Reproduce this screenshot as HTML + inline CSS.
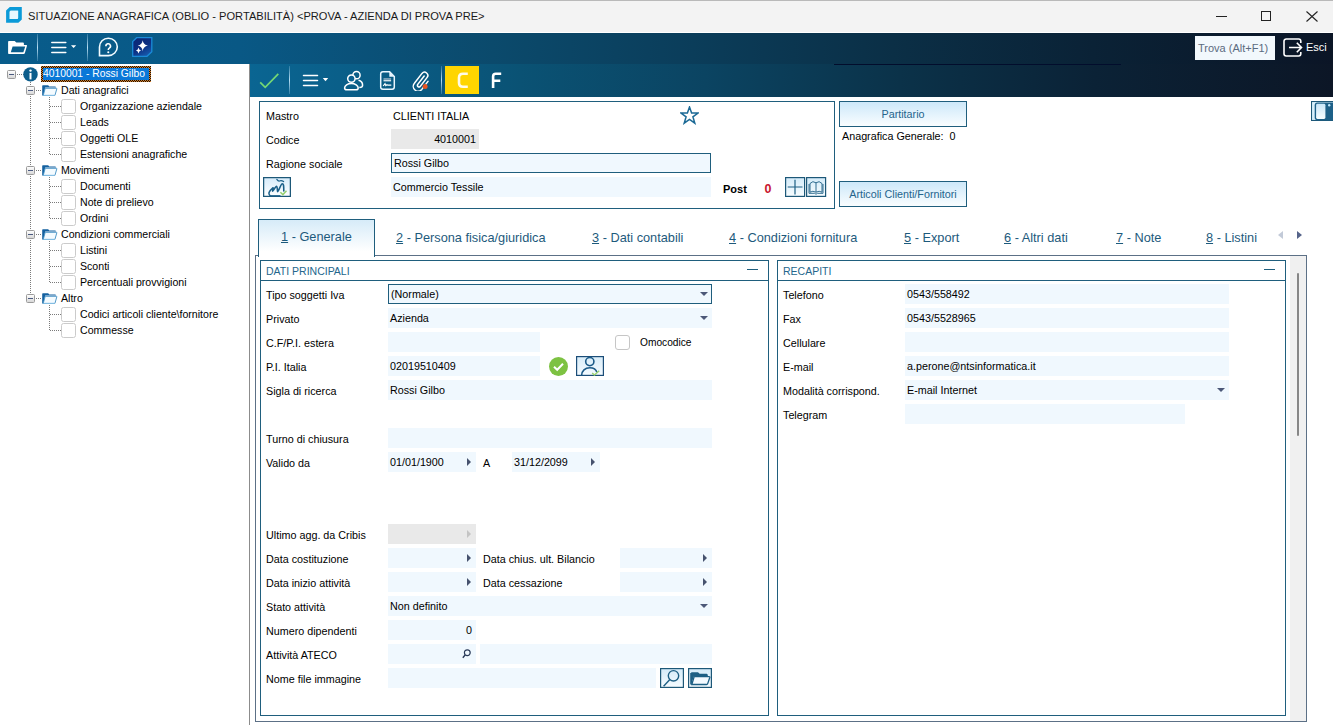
<!DOCTYPE html>
<html><head><meta charset="utf-8">
<style>
*{margin:0;padding:0;box-sizing:border-box}
html,body{width:1333px;height:725px;overflow:hidden;background:#fff;font-family:"Liberation Sans",sans-serif;color:#000}
.a{position:absolute}
.t{position:absolute;white-space:nowrap;font-size:10.75px;line-height:20px}
#title{left:0;top:0;width:1333px;height:32px;background:#f3f3f3;border-top:1px solid #b9b9b9}
#tb1{left:0;top:33px;width:1333px;height:31px;background:linear-gradient(90deg,#085c8b 0%,#095885 18%,#0b4a6c 37%,#0b3d5a 52%,#0b2f46 67%,#0a2236 82%,#0b1526 100%)}
#tb2{left:250px;top:64px;width:1083px;height:33px;background:linear-gradient(90deg,#0a6592 0%,#0a5a82 15%,#0a5274 25%,#0b4462 42%,#0b3249 60%,#0b2236 78%,#0c1626 100%)}
#tree{left:0;top:64px;width:249px;height:661px;background:#fff}
#split{left:249px;top:64px;width:1px;height:661px;background:#8c8c8c}
.fld{position:absolute;background:#f0f8fe;height:20px}
.fb{border:1px solid #1f5e7d}
.gray{background:#e9e9e9}
.lbl{position:absolute;white-space:nowrap;font-size:10.75px;line-height:20px}
.grp{position:absolute;border:1px solid #1f5e7d}
.arr{position:absolute;width:0;height:0;border-left:4px solid transparent;border-right:4px solid transparent;border-top:4px solid #4c5878}
.rarr{position:absolute;width:0;height:0;border-top:4px solid transparent;border-bottom:4px solid transparent;border-left:4.5px solid #46526e}
.tab{position:absolute;top:223px;white-space:nowrap;font-size:12.75px;line-height:30px;color:#1d5a7c}
.tab u{text-decoration:underline}
.tr{position:absolute;white-space:nowrap;font-size:10.6px;line-height:16px}
.cb{position:absolute;width:15px;height:15px;border:1px solid #cbcbcb;border-radius:2.5px;background:#fff}
.btn{position:absolute;border:1px solid #1f5e7d;background:linear-gradient(#cde8f9,#f9fdff);color:#24648c;font-size:10.75px;text-align:center}
</style></head><body>
<div id="title" class="a">
<svg class="a" style="left:6px;top:6px" width="16" height="16" viewBox="0 0 16 16"><path d="M3.8 0.1H15.8V12.4L12.4 15.7H0.1V3.4Z M4.9 3.7Q3.7 3.7 3.7 4.9V11.9H10.9Q12.1 11.9 12.1 10.7V3.7Z" fill="#0b9ad8" fill-rule="evenodd"/><path d="M4.9 3.7Q3.7 3.7 3.7 4.9V11.9H10.9Q12.1 11.9 12.1 10.7V3.7Z" fill="#e8f8ff"/></svg>
<div class="t" style="left:28px;top:-1px;line-height:32px;font-size:11.1px;color:#1a1a1a">SITUAZIONE ANAGRAFICA (OBLIO - PORTABILITÀ) &lt;PROVA - AZIENDA DI PROVA PRE&gt;</div>
<div class="a" style="left:1216px;top:15px;width:11px;height:1px;background:#222"></div>
<div class="a" style="left:1261px;top:10px;width:10px;height:10px;border:1px solid #222"></div>
<svg class="a" style="left:1306px;top:10px" width="12" height="11" viewBox="0 0 12 11"><path d="M0.5 0.5L11.5 10.5M11.5 0.5L0.5 10.5" stroke="#222" stroke-width="1.1"/></svg>
</div>
<div id="tb1" class="a"><div class="a" style="left:0;top:-1px;width:1333px;height:32px">
<svg class="a" style="left:0;top:0" width="30" height="32" viewBox="0 32 30 32"><path d="M8.1 53.2V41.8Q8.1 40.9 9 40.9H14.7L16.3 42.5H23Q23.9 42.5 23.9 43.4V44.9H26.3Q27.2 44.9 27 45.8L24.8 53.2Q24.5 54 23.7 54H8.9Q8.1 54 8.1 53.2Z" fill="#fff"/><path d="M12.6 46.5H25.2L23.4 52.3H10.8Z" fill="#085c8b"/></svg>
<div class="a" style="left:37px;top:2px;width:1px;height:27px;background:linear-gradient(rgba(190,230,255,.2),rgba(200,235,255,.9) 50%,rgba(190,230,255,.2))"></div>
<svg class="a" style="left:50px;top:9px" width="28" height="14" viewBox="0 0 28 14"><path d="M1.8 1.5H15.8M1.8 6.5H15.8M1.8 11.5H15.8" stroke="#fff" stroke-width="1.5" stroke-linecap="round"/><path d="M21 4.3H26.2L23.6 7Z" fill="#fff"/></svg>
<div class="a" style="left:87px;top:2px;width:1px;height:27px;background:linear-gradient(rgba(190,230,255,.2),rgba(200,235,255,.9) 50%,rgba(190,230,255,.2))"></div>
<svg class="a" style="left:98px;top:5px" width="21" height="20" viewBox="0 0 21 20"><path d="M1.5 18.6V10A8.9 8.7 0 1 1 10.4 18.6Z" fill="none" stroke="#f2fbff" stroke-width="1.6"/><path d="M7.9 9.2A2.3 2.3 0 1 1 11.3 11.1C10.6 11.5 10.3 12 10.3 12.9" fill="none" stroke="#fff" stroke-width="1.6"/><circle cx="10.3" cy="15.2" r="1.05" fill="#fff"/></svg>
<svg class="a" style="left:132px;top:5px" width="21" height="20" viewBox="0 0 21 20"><defs><linearGradient id="sg" x1="0" y1="0" x2="0.6" y2="1"><stop offset="0" stop-color="#0a2572"/><stop offset="0.6" stop-color="#0c2f82"/><stop offset="1" stop-color="#1656a8"/></linearGradient></defs><path d="M4.6 0.7H19.8V14.8L15 19.3H0.7V4.6Z" fill="url(#sg)" stroke="#1a8ad8" stroke-width="1.3"/><path d="M10.7 3.2Q11.2 7.6 15.9 8.6Q11.2 9.6 10.7 14.2Q10.2 9.6 5.8 8.6Q10.2 7.6 10.7 3.2Z" fill="#fff"/><path d="M6.5 10.6Q6.8 13 9 13.6Q6.8 14.2 6.5 16.6Q6.2 14.2 4 13.6Q6.2 13 6.5 10.6Z" fill="#fff"/></svg>
<div class="a" style="left:1195px;top:4px;width:80px;height:24px;background:#f2f8fc"></div>
<div class="t" style="left:1198px;top:6px;font-size:11px;color:#5b6b80">Trova (Alt+F1)</div>
<svg class="a" style="left:1283px;top:6px" width="20" height="19" viewBox="0 0 20 19"><path d="M17.8 5V3.2A2.2 2.2 0 0 0 15.6 1H3.2A2.2 2.2 0 0 0 1 3.2V15.8A2.2 2.2 0 0 0 3.2 18H15.6A2.2 2.2 0 0 0 17.8 15.8V14" fill="none" stroke="#fff" stroke-width="1.6"/><path d="M6 9.5H18.5M13.8 4.8L18.5 9.5L13.8 14.2" fill="none" stroke="#fff" stroke-width="1.6"/></svg>
<div class="t" style="left:1306px;top:5px;font-size:11px;color:#fff">Esci</div>

</div></div>
<div id="tb2" class="a">
<div class="a" style="left:584px;top:0;width:287px;height:1px;background:#020d2c"></div>
<svg class="a" style="left:9px;top:9px" width="20" height="16" viewBox="0 0 20 16"><path d="M1.2 9.3L6.2 14.4L19.3 0.8" fill="none" stroke="#74d874" stroke-width="1.7"/></svg>
<div class="a" style="left:39px;top:2px;width:1px;height:28px;background:linear-gradient(rgba(190,230,255,.2),rgba(200,235,255,.9) 50%,rgba(190,230,255,.2))"></div>
<svg class="a" style="left:52px;top:10px" width="28" height="13" viewBox="0 0 28 13"><path d="M1.5 1.4H15.5M1.5 6.5H15.5M1.5 11.4H15.5" stroke="#fff" stroke-width="1.5" stroke-linecap="round"/><path d="M20.8 4H26.2L23.5 7.2Z" fill="#fff"/></svg>
<svg class="a" style="left:93px;top:6px" width="21" height="21" viewBox="0 0 21 21"><circle cx="13.5" cy="5.2" r="3.6" fill="none" stroke="#fff" stroke-width="1.5"/><path d="M15.5 10.3C18 10.8 19.6 12.8 19.6 15.3C19.6 17 18.3 17.6 16.3 17.6" fill="none" stroke="#fff" stroke-width="1.5"/><circle cx="8.4" cy="8.6" r="3.7" fill="#0a6190" stroke="#fff" stroke-width="1.5"/><path d="M8.4 13.6C4.6 13.6 1.6 15.6 1.6 18C1.6 19.3 2.4 19.8 3.8 19.8H13C14.4 19.8 15.2 19.3 15.2 18C15.2 15.6 12.2 13.6 8.4 13.6Z" fill="none" stroke="#fff" stroke-width="1.5"/></svg>
<svg class="a" style="left:129px;top:6px" width="17" height="21" viewBox="0 0 17 21"><path d="M3.9 1.8H10.6L15.3 6.5V17Q15.3 19.2 13.1 19.2H3.9Q1.7 19.2 1.7 17V4Q1.7 1.8 3.9 1.8Z" fill="none" stroke="#eaf6ff" stroke-width="1.5"/><path d="M10.3 1.8L15.3 6.8H10.3Z" fill="#eaf6ff"/><path d="M4.5 8.3H12.1V9.6H4.5Z" fill="#a9bccb"/><path d="M4.5 9.9H12.1V11.4H4.5Z" fill="#d5e2ea"/><path d="M4.2 16L6 13.6L6.8 15.6L8 14.8L8.8 15.2H12.3" fill="none" stroke="#fff" stroke-width="1.2"/></svg>
<svg class="a" style="left:162px;top:6px" width="18" height="21" viewBox="0 0 18 21"><path d="M12.2 6L5.6 14.6A1.6 1.6 0 0 0 8 16.6L15 7.6A3.2 3.2 0 0 0 10 3.4L2.4 13.2A4.8 4.8 0 0 0 9.8 19.4L16 11.4" fill="none" stroke="#fff" stroke-width="1.5" stroke-linecap="round"/><circle cx="13.1" cy="16.6" r="2.5" fill="#e85420"/></svg>
<div class="a" style="left:191px;top:2px;width:1px;height:28px;background:linear-gradient(rgba(190,230,255,.2),rgba(200,235,255,.9) 50%,rgba(190,230,255,.2))"></div>
<div class="a" style="left:195px;top:2px;width:34px;height:28px;background:#ffd500"></div>
<svg class="a" style="left:195px;top:0" width="64" height="33" viewBox="0 0 64 33"><path d="M22.8 9.7H18Q14 9.7 14 13.7V18.8Q14 22.8 18 22.8H22.8" fill="none" stroke="#fffbe8" stroke-width="2.6"/><path d="M48.1 24.1V12.4Q48.1 9.7 50.8 9.7H56.2M48.1 16.7H55.3" fill="none" stroke="#fff" stroke-width="2.6"/></svg>
</div>
<div id="tree" class="a"></div>
<div class="a" style="left:0;top:0"><div class="a" style="left:7px;top:70px;width:9px;height:9px;border:1px solid #9a9a9a;border-radius:1.5px;background:linear-gradient(#fdfdfd,#d8d8d8)"><div class="a" style="left:1px;top:3px;width:5px;height:1.2px;background:#4a5a80"></div></div>
<div class="a" style="left:17px;top:74px;width:7px;height:1px;background:repeating-linear-gradient(90deg,#7a7a7a 0 1px,transparent 1px 2px)"></div>
<svg class="a" style="left:23px;top:67px" width="15" height="15" viewBox="0 0 15 15"><circle cx="7.5" cy="7.4" r="7.2" fill="#0d5e8c"/><circle cx="7.5" cy="3.6" r="1.2" fill="#fff"/><path d="M6.5 5.9H8.5V12.4H6.5Z" fill="#fff"/></svg>
<div class="a" style="left:41px;top:66px;width:110px;height:16px;background:repeating-conic-gradient(#1a1008 0 25%,#d9822b 0 50%) 0 0/2px 2px"></div><div class="a" style="left:43px;top:68px;width:106px;height:12px;background:#0a78d8"></div>
<div class="tr" style="left:43px;top:66px;color:#fff;font-size:10.3px">4010001 - Rossi Gilbo</div>
<div class="a" style="left:30px;top:82px;width:1px;height:216px;background:repeating-linear-gradient(#7a7a7a 0 1px,transparent 1px 2px)"></div>
<div class="a" style="left:26px;top:86px;width:9px;height:9px;border:1px solid #9a9a9a;border-radius:1.5px;background:linear-gradient(#fdfdfd,#d8d8d8)"><div class="a" style="left:1px;top:3px;width:5px;height:1.2px;background:#4a5a80"></div></div>
<div class="a" style="left:36px;top:90px;width:6px;height:1px;background:repeating-linear-gradient(90deg,#7a7a7a 0 1px,transparent 1px 2px)"></div>
<svg class="a" style="left:42px;top:85px" width="16" height="11" viewBox="0 0 16 11"><path d="M0.2 10.4V0.9Q0.2 0.2 0.9 0.2H6.2L7.2 1.6H13.4L14.2 2.6H3.2L1.6 10.4Z" fill="#1561a0"/><path d="M3.2 3.3H14.4Q15 3.3 14.8 3.9L13 10.1Q12.9 10.6 12.3 10.6H1.2Z" fill="#f4fbff" stroke="#3e8dc2" stroke-width="0.9"/><path d="M1.4 10.3H12.6" stroke="#8cc4e8" stroke-width="1"/></svg>
<div class="tr" style="left:61px;top:82px">Dati anagrafici</div>
<div class="a" style="left:49px;top:97px;width:1px;height:58px;background:repeating-linear-gradient(#7a7a7a 0 1px,transparent 1px 2px)"></div>
<div class="a" style="left:50px;top:106px;width:11px;height:1px;background:repeating-linear-gradient(90deg,#7a7a7a 0 1px,transparent 1px 2px)"></div>
<div class="cb" style="left:61px;top:99px"></div>
<div class="tr" style="left:80px;top:98px">Organizzazione aziendale</div>
<div class="a" style="left:50px;top:122px;width:11px;height:1px;background:repeating-linear-gradient(90deg,#7a7a7a 0 1px,transparent 1px 2px)"></div>
<div class="cb" style="left:61px;top:115px"></div>
<div class="tr" style="left:80px;top:114px">Leads</div>
<div class="a" style="left:50px;top:138px;width:11px;height:1px;background:repeating-linear-gradient(90deg,#7a7a7a 0 1px,transparent 1px 2px)"></div>
<div class="cb" style="left:61px;top:131px"></div>
<div class="tr" style="left:80px;top:130px">Oggetti OLE</div>
<div class="a" style="left:50px;top:154px;width:11px;height:1px;background:repeating-linear-gradient(90deg,#7a7a7a 0 1px,transparent 1px 2px)"></div>
<div class="cb" style="left:61px;top:147px"></div>
<div class="tr" style="left:80px;top:146px">Estensioni anagrafiche</div>
<div class="a" style="left:26px;top:166px;width:9px;height:9px;border:1px solid #9a9a9a;border-radius:1.5px;background:linear-gradient(#fdfdfd,#d8d8d8)"><div class="a" style="left:1px;top:3px;width:5px;height:1.2px;background:#4a5a80"></div></div>
<div class="a" style="left:36px;top:170px;width:6px;height:1px;background:repeating-linear-gradient(90deg,#7a7a7a 0 1px,transparent 1px 2px)"></div>
<svg class="a" style="left:42px;top:165px" width="16" height="11" viewBox="0 0 16 11"><path d="M0.2 10.4V0.9Q0.2 0.2 0.9 0.2H6.2L7.2 1.6H13.4L14.2 2.6H3.2L1.6 10.4Z" fill="#1561a0"/><path d="M3.2 3.3H14.4Q15 3.3 14.8 3.9L13 10.1Q12.9 10.6 12.3 10.6H1.2Z" fill="#f4fbff" stroke="#3e8dc2" stroke-width="0.9"/><path d="M1.4 10.3H12.6" stroke="#8cc4e8" stroke-width="1"/></svg>
<div class="tr" style="left:61px;top:162px">Movimenti</div>
<div class="a" style="left:49px;top:177px;width:1px;height:42px;background:repeating-linear-gradient(#7a7a7a 0 1px,transparent 1px 2px)"></div>
<div class="a" style="left:50px;top:186px;width:11px;height:1px;background:repeating-linear-gradient(90deg,#7a7a7a 0 1px,transparent 1px 2px)"></div>
<div class="cb" style="left:61px;top:179px"></div>
<div class="tr" style="left:80px;top:178px">Documenti</div>
<div class="a" style="left:50px;top:202px;width:11px;height:1px;background:repeating-linear-gradient(90deg,#7a7a7a 0 1px,transparent 1px 2px)"></div>
<div class="cb" style="left:61px;top:195px"></div>
<div class="tr" style="left:80px;top:194px">Note di prelievo</div>
<div class="a" style="left:50px;top:218px;width:11px;height:1px;background:repeating-linear-gradient(90deg,#7a7a7a 0 1px,transparent 1px 2px)"></div>
<div class="cb" style="left:61px;top:211px"></div>
<div class="tr" style="left:80px;top:210px">Ordini</div>
<div class="a" style="left:26px;top:230px;width:9px;height:9px;border:1px solid #9a9a9a;border-radius:1.5px;background:linear-gradient(#fdfdfd,#d8d8d8)"><div class="a" style="left:1px;top:3px;width:5px;height:1.2px;background:#4a5a80"></div></div>
<div class="a" style="left:36px;top:234px;width:6px;height:1px;background:repeating-linear-gradient(90deg,#7a7a7a 0 1px,transparent 1px 2px)"></div>
<svg class="a" style="left:42px;top:229px" width="16" height="11" viewBox="0 0 16 11"><path d="M0.2 10.4V0.9Q0.2 0.2 0.9 0.2H6.2L7.2 1.6H13.4L14.2 2.6H3.2L1.6 10.4Z" fill="#1561a0"/><path d="M3.2 3.3H14.4Q15 3.3 14.8 3.9L13 10.1Q12.9 10.6 12.3 10.6H1.2Z" fill="#f4fbff" stroke="#3e8dc2" stroke-width="0.9"/><path d="M1.4 10.3H12.6" stroke="#8cc4e8" stroke-width="1"/></svg>
<div class="tr" style="left:61px;top:226px">Condizioni commerciali</div>
<div class="a" style="left:49px;top:241px;width:1px;height:42px;background:repeating-linear-gradient(#7a7a7a 0 1px,transparent 1px 2px)"></div>
<div class="a" style="left:50px;top:250px;width:11px;height:1px;background:repeating-linear-gradient(90deg,#7a7a7a 0 1px,transparent 1px 2px)"></div>
<div class="cb" style="left:61px;top:243px"></div>
<div class="tr" style="left:80px;top:242px">Listini</div>
<div class="a" style="left:50px;top:266px;width:11px;height:1px;background:repeating-linear-gradient(90deg,#7a7a7a 0 1px,transparent 1px 2px)"></div>
<div class="cb" style="left:61px;top:259px"></div>
<div class="tr" style="left:80px;top:258px">Sconti</div>
<div class="a" style="left:50px;top:282px;width:11px;height:1px;background:repeating-linear-gradient(90deg,#7a7a7a 0 1px,transparent 1px 2px)"></div>
<div class="cb" style="left:61px;top:275px"></div>
<div class="tr" style="left:80px;top:274px">Percentuali provvigioni</div>
<div class="a" style="left:26px;top:294px;width:9px;height:9px;border:1px solid #9a9a9a;border-radius:1.5px;background:linear-gradient(#fdfdfd,#d8d8d8)"><div class="a" style="left:1px;top:3px;width:5px;height:1.2px;background:#4a5a80"></div></div>
<div class="a" style="left:36px;top:298px;width:6px;height:1px;background:repeating-linear-gradient(90deg,#7a7a7a 0 1px,transparent 1px 2px)"></div>
<svg class="a" style="left:42px;top:293px" width="16" height="11" viewBox="0 0 16 11"><path d="M0.2 10.4V0.9Q0.2 0.2 0.9 0.2H6.2L7.2 1.6H13.4L14.2 2.6H3.2L1.6 10.4Z" fill="#1561a0"/><path d="M3.2 3.3H14.4Q15 3.3 14.8 3.9L13 10.1Q12.9 10.6 12.3 10.6H1.2Z" fill="#f4fbff" stroke="#3e8dc2" stroke-width="0.9"/><path d="M1.4 10.3H12.6" stroke="#8cc4e8" stroke-width="1"/></svg>
<div class="tr" style="left:61px;top:290px">Altro</div>
<div class="a" style="left:49px;top:305px;width:1px;height:26px;background:repeating-linear-gradient(#7a7a7a 0 1px,transparent 1px 2px)"></div>
<div class="a" style="left:50px;top:314px;width:11px;height:1px;background:repeating-linear-gradient(90deg,#7a7a7a 0 1px,transparent 1px 2px)"></div>
<div class="cb" style="left:61px;top:307px"></div>
<div class="tr" style="left:80px;top:306px">Codici articoli cliente\fornitore</div>
<div class="a" style="left:50px;top:330px;width:11px;height:1px;background:repeating-linear-gradient(90deg,#7a7a7a 0 1px,transparent 1px 2px)"></div>
<div class="cb" style="left:61px;top:323px"></div>
<div class="tr" style="left:80px;top:322px">Commesse</div></div>
<div id="split" class="a"></div>
<div class="a" style="left:0;top:0"><div class="grp" style="left:259px;top:101px;width:576px;height:108px"></div>
<div class="lbl" style="left:266px;top:106px;">Mastro</div>
<div class="lbl" style="left:393px;top:106px;">CLIENTI ITALIA</div>
<div class="lbl" style="left:266px;top:130px;">Codice</div>
<div class="fld gray" style="left:391px;top:129px;width:88px;height:20px"><div class="lbl" style="right:3px;top:0">4010001</div></div>
<div class="lbl" style="left:266px;top:154px;">Ragione sociale</div>
<div class="fld fb" style="left:391px;top:153px;width:320px;height:20px"><div class="lbl" style="left:2px;top:-1px">Rossi Gilbo</div></div>
<div class="fld" style="left:391px;top:177px;width:320px;height:20px"><div class="lbl" style="left:2px;top:0">Commercio Tessile</div></div>
<svg class="a" style="left:263px;top:177px" width="28" height="20" viewBox="0 0 28 20"><defs><linearGradient id="bg1" x1="0" y1="0" x2="0" y2="1"><stop offset="0" stop-color="#d6ebfa"/><stop offset="1" stop-color="#ffffff"/></linearGradient></defs><rect x="0.6" y="0.6" width="26.8" height="18.8" fill="url(#bg1)" stroke="#1d5878" stroke-width="1.3"/><path d="M7 18.6C5 17 5.5 14.5 9.9 10.8C10.5 10.5 9.3 14.2 9.6 14.3C10 14.4 12.5 9 13.8 9.4C14.5 9.6 14.2 14.8 14.8 14.6C15.5 14.4 18 6.8 19.3 6.8C20.5 6.8 20.8 8 20.8 14" fill="none" stroke="#1b5f88" stroke-width="1.6" stroke-linecap="round" stroke-linejoin="round"/><path d="M13.8 2.4C14.8 3.8 15.6 4.3 16.5 4C17.6 3.5 18.6 3.3 20.6 4.6" fill="none" stroke="#1b5f88" stroke-width="1.2" stroke-linecap="round"/><path d="M7 18.8H17.5" stroke="#1b5f88" stroke-width="1.3"/><path d="M17.4 15.3L19.9 17.6L23.5 13.8" fill="none" stroke="#96d070" stroke-width="1.5"/></svg>
<svg class="a" style="left:680px;top:106px" width="19" height="19" viewBox="0 0 19 19"><path d="M9.5 1L11.6 7H18L12.9 10.8L14.8 17.2L9.5 13.4L4.2 17.2L6.1 10.8L1 7H7.4Z" fill="none" stroke="#1c6a96" stroke-width="1.5" stroke-linejoin="miter"/></svg>
<div class="lbl" style="left:723px;top:179px;font-weight:bold;font-size:11px">Post</div>
<div class="lbl" style="left:764.5px;top:179px;font-weight:bold;color:#c8142e;font-size:12.5px">0</div>
<svg class="a" style="left:785px;top:177px" width="42" height="20" viewBox="0 0 42 20"><defs><linearGradient id="bg5" x1="0" y1="0" x2="0" y2="1"><stop offset="0" stop-color="#d4ebf9"/><stop offset="1" stop-color="#f8fdff"/></linearGradient></defs><rect x="0.6" y="0.6" width="19" height="18.8" fill="url(#bg5)" stroke="#1d5878" stroke-width="1.2"/><path d="M10 2.8V17.4M2.7 10H17.5" stroke="#1d5f84" stroke-width="1.2"/><rect x="21.6" y="0.6" width="19" height="18.8" fill="url(#bg5)" stroke="#1d5878" stroke-width="1.2"/><path d="M25 6.5Q27.8 3.2 31 5.8Q34.2 3.2 37 6.5V15.2Q34.2 13.3 31 15.2Q27.8 13.3 25 15.2Z M31 5.8V15.2" fill="none" stroke="#1d5f84" stroke-width="0.9"/><path d="M24 7V16.3H29.5L31 17.2L32.5 16.3H38V7" fill="none" stroke="#1d5f84" stroke-width="0.9"/></svg>
<div class="btn" style="left:839px;top:101px;width:128px;height:26px;line-height:24px">Partitario</div>
<div class="lbl" style="left:842px;top:126px;">Anagrafica Generale:&nbsp; 0</div>
<div class="btn" style="left:839px;top:181px;width:128px;height:26px;line-height:24px">Articoli Clienti/Fornitori</div>
<svg class="a" style="left:1311px;top:101px" width="22" height="20" viewBox="0 0 22 20"><defs><linearGradient id="bg4" x1="0" y1="0" x2="0" y2="1"><stop offset="0" stop-color="#c9e6f8"/><stop offset="1" stop-color="#f8fdff"/></linearGradient></defs><rect x="0.5" y="0.5" width="25" height="19" fill="#d9f0fb" stroke="#1d5878" stroke-width="1.1"/><rect x="3.7" y="1.6" width="22" height="17.6" rx="2.6" fill="#1d6088"/><rect x="5.1" y="2.8" width="9.3" height="15.2" rx="1.4" fill="url(#bg4)"/><circle cx="18.2" cy="4.3" r="1.2" fill="#bfe6fb"/></svg></div>
<div class="a" style="left:0;top:0"><div class="a" style="left:255px;top:255px;width:1052px;height:467px;border:1px solid #5c7086"></div>
<div class="a" style="left:258px;top:219px;width:117px;height:38px;border:1px solid #1f5e7d;border-bottom:none;background:linear-gradient(#d6ebf8,#ffffff 85%)"></div>
<div class="tab" style="left:281px;top:222px"><u>1</u> - Generale</div>
<div class="tab" style="left:396px"><u>2</u> - Persona fisica/giuridica</div>
<div class="tab" style="left:592px"><u>3</u> - Dati contabili</div>
<div class="tab" style="left:729px"><u>4</u> - Condizioni fornitura</div>
<div class="tab" style="left:904px"><u>5</u> - Export</div>
<div class="tab" style="left:1004px"><u>6</u> - Altri dati</div>
<div class="tab" style="left:1116px"><u>7</u> - Note</div>
<div class="tab" style="left:1206px"><u>8</u> - Listini</div>
<div class="rarr" style="left:1278px;top:231px;border-left:none;border-right:5px solid #c2cad8;border-top-width:4.3px;border-bottom-width:4.3px"></div>
<div class="rarr" style="left:1297px;top:231px;border-left:5px solid #56648a;border-top-width:4.3px;border-bottom-width:4.3px"></div>
<div class="a" style="left:1290px;top:256px;width:16px;height:465px;background:#f0f0f0"></div>
<div class="a" style="left:1297px;top:273px;width:2px;height:163px;background:#868686;border-radius:1px"></div>
<div class="grp" style="left:260px;top:260px;width:509px;height:456px"></div>
<div class="a" style="left:260px;top:280px;width:509px;height:1px;background:#1f5e7d"></div>
<div class="lbl" style="left:266px;top:261px;color:#24668c;font-size:10.5px">DATI PRINCIPALI</div>
<div class="a" style="left:747px;top:269px;width:11px;height:1px;background:#1f5e7d"></div>
<div class="grp" style="left:777px;top:260px;width:509px;height:456px"></div>
<div class="a" style="left:777px;top:280px;width:509px;height:1px;background:#1f5e7d"></div>
<div class="lbl" style="left:783px;top:261px;color:#24668c;font-size:10.5px">RECAPITI</div>
<div class="a" style="left:1264px;top:269px;width:11px;height:1px;background:#1f5e7d"></div>
<div class="lbl" style="left:266px;top:285px;">Tipo soggetti Iva</div>
<div class="fld fb" style="left:388px;top:284px;width:324px"><div class="lbl" style="left:2px;top:-1px">(Normale)</div><div class="arr" style="left:311px;top:7px"></div></div>
<div class="lbl" style="left:266px;top:309px;">Privato</div>
<div class="fld " style="left:388px;top:308px;width:324px;"><div class="lbl" style="left:2px;top:0">Azienda</div><div class="arr" style="left:312px;top:8px"></div></div>
<div class="lbl" style="left:266px;top:333px;">C.F/P.I. estera</div>
<div class="fld " style="left:388px;top:332px;width:152px;"></div>
<div class="cb" style="left:615px;top:335px;width:15px;height:15px;border:1.5px solid #c6c6c6;border-radius:3px"></div>
<div class="lbl" style="left:640px;top:333px;font-size:10.2px">Omocodice</div>
<div class="lbl" style="left:266px;top:357px;">P.I. Italia</div>
<div class="fld " style="left:388px;top:356px;width:152px;"><div class="lbl" style="left:2px;top:0">02019510409</div></div>
<svg class="a" style="left:549px;top:357px" width="19" height="19" viewBox="0 0 19 19"><circle cx="9.5" cy="9.5" r="9.5" fill="#7dc242"/><path d="M5 9.8L8.2 12.8L14 6.8" fill="none" stroke="#fff" stroke-width="2"/></svg>
<svg class="a" style="left:576px;top:356px" width="28" height="20" viewBox="0 0 28 20"><defs><linearGradient id="bg2" x1="0" y1="0" x2="0" y2="1"><stop offset="0" stop-color="#d9edf9"/><stop offset="1" stop-color="#f4faff"/></linearGradient></defs><rect x="0.6" y="0.6" width="26.8" height="18.8" fill="url(#bg2)" stroke="#1b4d78" stroke-width="1.2"/><circle cx="13.8" cy="5.6" r="4.1" fill="none" stroke="#1b5a88" stroke-width="1.6"/><path d="M5.6 19.6C5.6 14.8 9.2 11.8 13.8 11.8C17.8 11.8 20.2 13.8 20.9 16.4" fill="none" stroke="#1b5a88" stroke-width="1.6"/><path d="M16.2 17L18.4 19L23.2 14.8" fill="none" stroke="#9ad070" stroke-width="1.4"/></svg>
<div class="lbl" style="left:266px;top:381px;">Sigla di ricerca</div>
<div class="fld " style="left:388px;top:380px;width:324px;"><div class="lbl" style="left:2px;top:0">Rossi Gilbo</div></div>
<div class="lbl" style="left:266px;top:429px;">Turno di chiusura</div>
<div class="fld " style="left:388px;top:428px;width:324px;"></div>
<div class="lbl" style="left:266px;top:453px;">Valido da</div>
<div class="fld " style="left:388px;top:452px;width:88px;"><div class="lbl" style="left:2px;top:0">01/01/1900</div><div class="rarr" style="left:79px;top:6px"></div></div>
<div class="lbl" style="left:483px;top:453px;">A</div>
<div class="fld " style="left:512px;top:452px;width:88px;"><div class="lbl" style="left:2px;top:0">31/12/2099</div><div class="rarr" style="left:79px;top:6px"></div></div>
<div class="lbl" style="left:266px;top:525px;">Ultimo agg. da Cribis</div>
<div class="fld gray" style="left:388px;top:524px;width:88px;"><div class="rarr" style="left:79px;top:6px;border-left-color:#c4c4c4"></div></div>
<div class="lbl" style="left:266px;top:549px;">Data costituzione</div>
<div class="fld " style="left:388px;top:548px;width:88px;"><div class="rarr" style="left:79px;top:6px"></div></div>
<div class="lbl" style="left:483px;top:549px;">Data chius. ult. Bilancio</div>
<div class="fld " style="left:620px;top:548px;width:92px;"><div class="rarr" style="left:83px;top:6px"></div></div>
<div class="lbl" style="left:266px;top:573px;">Data inizio attività</div>
<div class="fld " style="left:388px;top:572px;width:88px;"><div class="rarr" style="left:79px;top:6px"></div></div>
<div class="lbl" style="left:483px;top:573px;">Data cessazione</div>
<div class="fld " style="left:620px;top:572px;width:92px;"><div class="rarr" style="left:83px;top:6px"></div></div>
<div class="lbl" style="left:266px;top:597px;">Stato attività</div>
<div class="fld " style="left:388px;top:596px;width:324px;"><div class="lbl" style="left:2px;top:0">Non definito</div><div class="arr" style="left:312px;top:8px"></div></div>
<div class="lbl" style="left:266px;top:621px;">Numero dipendenti</div>
<div class="fld " style="left:388px;top:620px;width:88px;"><div class="lbl" style="right:4px;top:0">0</div></div>
<div class="lbl" style="left:266px;top:645px;">Attività ATECO</div>
<div class="fld" style="left:388px;top:644px;width:88px"><svg class="a" style="left:74px;top:5px" width="9" height="10" viewBox="0 0 9 10"><circle cx="5.3" cy="3.7" r="2.9" fill="none" stroke="#2a3a58" stroke-width="1.2"/><path d="M3.3 5.8L0.8 8.8" stroke="#2a3a58" stroke-width="1.4"/></svg></div>
<div class="fld " style="left:480px;top:644px;width:232px;"></div>
<div class="lbl" style="left:266px;top:669px;">Nome file immagine</div>
<div class="fld " style="left:388px;top:668px;width:268px;"></div>
<svg class="a" style="left:660px;top:668px" width="52" height="20" viewBox="0 0 52 20"><defs><linearGradient id="bg3" x1="0" y1="0" x2="0" y2="1"><stop offset="0" stop-color="#d4ebf9"/><stop offset="1" stop-color="#f6fcff"/></linearGradient></defs><rect x="0.6" y="0.6" width="22.8" height="18.8" fill="url(#bg3)" stroke="#1d5878" stroke-width="1.2"/><circle cx="13.5" cy="7.8" r="5.2" fill="none" stroke="#1d5f84" stroke-width="1.4"/><path d="M9.6 11.8L3.6 18.2" stroke="#1d5f84" stroke-width="1.4"/><rect x="28.6" y="0.6" width="22.8" height="18.8" fill="url(#bg3)" stroke="#1d5878" stroke-width="1.2"/><path d="M31 16.6V5Q31 4.2 31.8 4.2H38L39.7 5.8H46.6Q47.4 5.8 47.6 6.6L48 8.2H34Z" fill="#1d5f84"/><path d="M31 5V16.6" stroke="#1d5f84" stroke-width="1.6"/><path d="M34.5 8.7H49.2Q50 8.7 49.8 9.5L47.6 15.9Q47.4 16.5 46.6 16.5H31.8L34 9.3Q34.2 8.7 34.5 8.7Z" fill="#f4faff" stroke="#1d5f84" stroke-width="1.3"/></svg>
<div class="lbl" style="left:783px;top:285px;">Telefono</div>
<div class="fld " style="left:905px;top:284px;width:324px;"><div class="lbl" style="left:2px;top:0">0543/558492</div></div>
<div class="lbl" style="left:783px;top:309px;">Fax</div>
<div class="fld " style="left:905px;top:308px;width:324px;"><div class="lbl" style="left:2px;top:0">0543/5528965</div></div>
<div class="lbl" style="left:783px;top:333px;">Cellulare</div>
<div class="fld " style="left:905px;top:332px;width:324px;"></div>
<div class="lbl" style="left:783px;top:357px;">E-mail</div>
<div class="fld " style="left:905px;top:356px;width:324px;"><div class="lbl" style="left:2px;top:0">a.perone@ntsinformatica.it</div></div>
<div class="lbl" style="left:783px;top:381px;">Modalità corrispond.</div>
<div class="fld " style="left:905px;top:380px;width:324px;"><div class="lbl" style="left:2px;top:0">E-mail Internet</div><div class="arr" style="left:312px;top:8px"></div></div>
<div class="lbl" style="left:783px;top:405px;">Telegram</div>
<div class="fld " style="left:905px;top:404px;width:280px;"></div></div>
</body></html>
